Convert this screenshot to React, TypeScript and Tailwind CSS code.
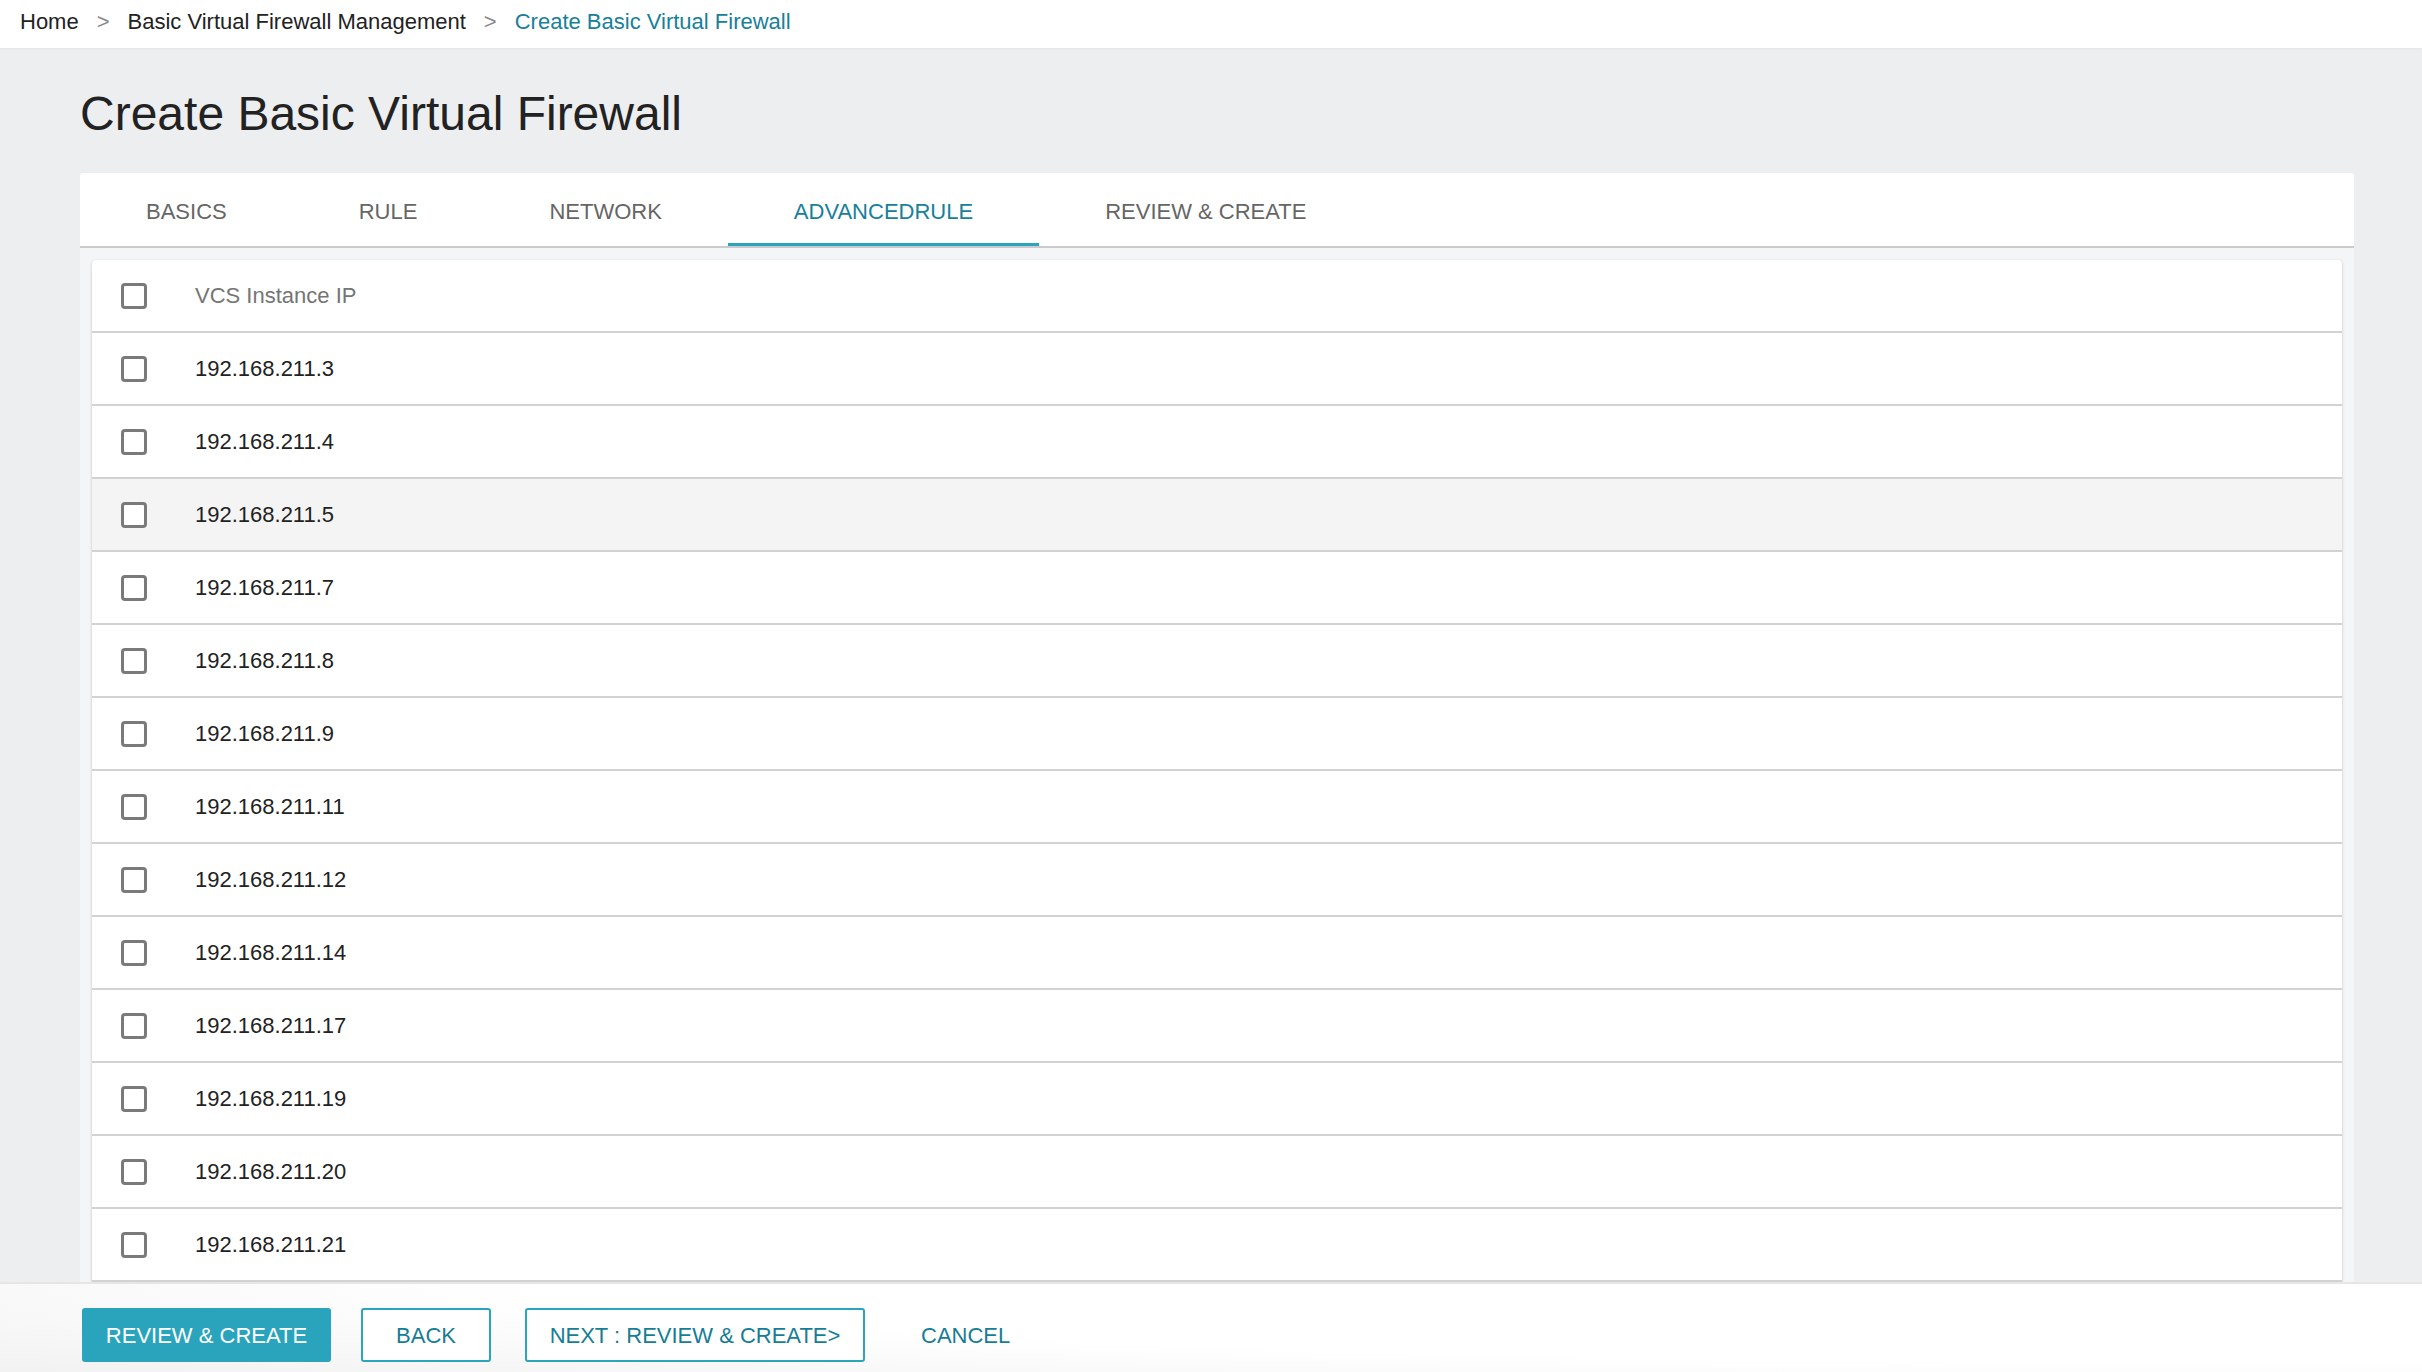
import React from "react";

const ips = [
  "192.168.211.3",
  "192.168.211.4",
  "192.168.211.5",
  "192.168.211.7",
  "192.168.211.8",
  "192.168.211.9",
  "192.168.211.11",
  "192.168.211.12",
  "192.168.211.14",
  "192.168.211.17",
  "192.168.211.19",
  "192.168.211.20",
  "192.168.211.21",
];

const tabs = ["BASICS", "RULE", "NETWORK", "ADVANCEDRULE", "REVIEW & CREATE"];

function Checkbox() {
  return <div className="w-[26px] h-[26px] shrink-0 rounded-[4px] border-[3px] border-[#7a7a7a] bg-white" />;
}

export default function App() {
  return (
    <div
      className="h-[1372px] w-full flex flex-col overflow-hidden bg-[#edeef0] text-[22px] text-[#222222]"
      style={{ fontFamily: '"Liberation Sans", Arial, sans-serif' }}
    >
      {/* Breadcrumb */}
      <div className="h-[48px] shrink-0 bg-white flex items-center pl-[20px] pb-[6px] shadow-[0_1px_2px_rgba(0,0,0,0.04)]">
        <span className="text-[#222222]">Home</span>
        <span className="mx-[18px] text-[#8a8a8a]">&gt;</span>
        <span className="text-[#222222]">Basic Virtual Firewall Management</span>
        <span className="mx-[18px] text-[#8a8a8a]">&gt;</span>
        <span className="text-[#17809a]">Create Basic Virtual Firewall</span>
      </div>

      {/* Main */}
      <div className="flex-1 min-h-0 overflow-hidden pl-[80px] pr-[68px]">
        <h1 className="mt-[37px] mb-[30px] text-[48px] leading-[58px] text-[#222222]">
          Create Basic Virtual Firewall
        </h1>

        <div className="bg-white rounded-t-[3px] border-b-2 border-[#c9cacd] flex h-[75px]">
          {tabs.map((t) => {
            const active = t === "ADVANCEDRULE";
            return (
              <div
                key={t}
                className={
                  "relative px-[66px] flex items-center " +
                  (active ? "text-[#17809a]" : "text-[#666666]")
                }
              >
                <span className="mt-[4px]">{t}</span>
                {active && <div className="absolute left-0 right-0 bottom-0 h-[3px] bg-[#2ea5bf]" />}
              </div>
            );
          })}
        </div>

        <div className="bg-[#f4f5f7] px-[12px] pt-[12px] h-[2000px]">
          <div className="bg-white rounded-t-[4px] shadow-[0_1px_3px_rgba(0,0,0,0.22)]">
            <div className="h-[73px] flex items-center pl-[29px] border-b-2 border-[#d2d2d2]">
              <Checkbox />
              <span className="ml-[48px] text-[#757575]">VCS Instance IP</span>
            </div>
            {ips.map((ip, i) => (
              <div
                key={ip}
                className={
                  "h-[73px] flex items-center pl-[29px] border-b-2 border-[#d2d2d2] " +
                  (i === 2 ? "bg-[#f4f4f4]" : "bg-white")
                }
              >
                <Checkbox />
                <span className="ml-[48px] text-[#222222]">{ip}</span>
              </div>
            ))}
          </div>
        </div>
      </div>

      {/* Footer */}
      <div className="h-[90px] shrink-0 border-t-2 border-[#e6e6e6] bg-[radial-gradient(ellipse_120%_160%_at_90%_0%,#ffffff_55%,#f1f1f1_100%)] flex items-start pt-[24px] pl-[82px]">
        <button className="w-[249px] h-[54px] rounded-[3px] bg-[#29a4bc] text-white text-[22px]">
          REVIEW &amp; CREATE
        </button>
        <button className="ml-[30px] w-[130px] h-[54px] rounded-[3px] border-2 border-[#2ba5bd] bg-white text-[#167d96] text-[22px]">
          BACK
        </button>
        <button className="ml-[34px] w-[340px] h-[54px] rounded-[3px] border-2 border-[#2ba5bd] bg-white text-[#167d96] text-[22px]">
          NEXT : REVIEW &amp; CREATE&gt;
        </button>
        <button className="ml-[56px] h-[54px] text-[#167d96] text-[22px]">CANCEL</button>
      </div>
    </div>
  );
}
